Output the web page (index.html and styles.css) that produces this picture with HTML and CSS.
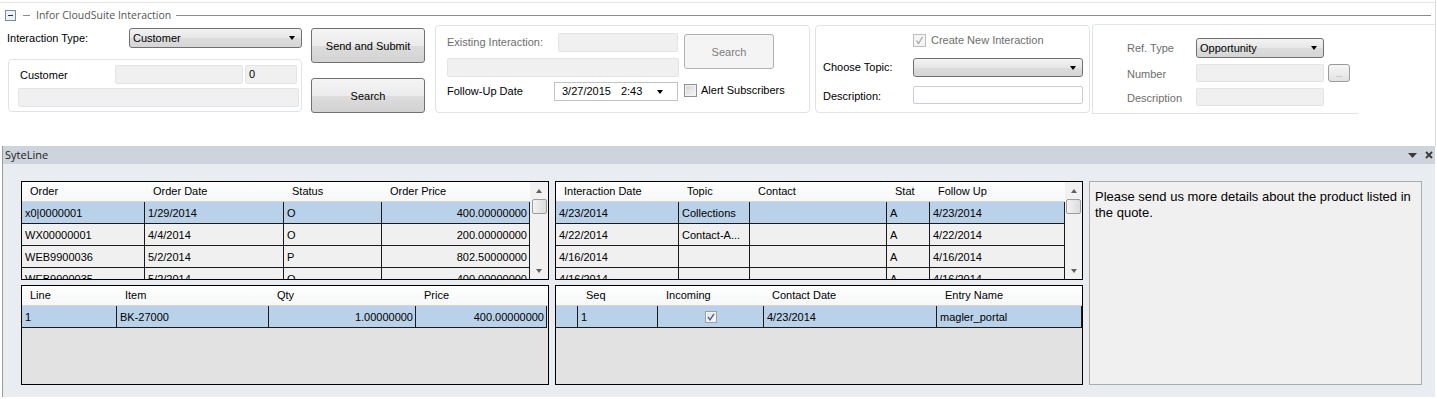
FILE: index.html
```html
<!DOCTYPE html>
<html lang="en">

<head>
    <meta charset="UTF-8">
    <meta name="viewport" content="width=device-width, initial-scale=1.0">
    <title>Infor CloudSuite Interaction</title>
    <link rel="stylesheet" href="styles.css">
</head>

<body>
    <div class="top">
        <div class="legend">
            <span class="toggle">
                <svg width="11" height="11" viewBox="0 0 11 11">
                    <rect x="0.5" y="0.5" width="10" height="10" fill="#eef1f5" stroke="#7d8a97" />
                    <path d="M3 5.5h5" stroke="#1d3047" stroke-width="1" />
                </svg>
            </span>
            <span class="dash"></span>
            <span class="legend-text">Infor CloudSuite Interaction</span>
            <span class="legend-line"></span>
        </div>

        <div class="panels">
            <!-- interaction type + customer -->
            <div class="col-type">
                <div class="type-row">
                    <span class="lbl">Interaction Type:</span>
                    <div class="combo type-combo"><span>Customer</span><i class="caret"></i></div>
                </div>
                <div class="cust-box">
                    <div class="cust-row">
                        <span class="lbl">Customer</span>
                        <div class="tb cust-id"></div>
                        <div class="tb cust-seq">0</div>
                    </div>
                    <div class="tb cust-name"></div>
                </div>
            </div>

            <div class="col-btns">
                <div class="btn send">Send and Submit</div>
                <div class="btn search">Search</div>
            </div>

            <!-- existing interaction -->
            <div class="panel p2">
                <div class="p2-top">
                    <div class="p2-fields">
                        <div class="p2-row">
                            <span class="lbl gray">Existing Interaction:</span>
                            <div class="tb exist-id"></div>
                        </div>
                        <div class="tb exist-name"></div>
                    </div>
                    <div class="btn btn-off p2-search">Search</div>
                </div>
                <div class="p2-row follow">
                    <span class="lbl">Follow-Up Date</span>
                    <div class="date"><span>3/27/2015</span><span class="time">2:43</span><i class="caret"></i></div>
                    <span class="chk"></span>
                    <span class="chk-lbl">Alert Subscribers</span>
                </div>
            </div>

            <!-- new interaction -->
            <div class="panel p3">
                <div class="p3-check">
                    <span class="chk chk-off">
                        <svg width="11" height="11" viewBox="0 0 11 11">
                            <path d="M2.5 5.5l2 3 4-6.5" fill="none" stroke="#a9a9a9" stroke-width="1.3" />
                        </svg>
                    </span>
                    <span class="chk-lbl gray">Create New Interaction</span>
                </div>
                <div class="p3-row">
                    <span class="lbl">Choose Topic:</span>
                    <div class="combo topic-combo"><span></span><i class="caret"></i></div>
                </div>
                <div class="p3-row desc">
                    <span class="lbl">Description:</span>
                    <div class="tb tb-white topic-desc"></div>
                </div>
            </div>

            <!-- reference -->
            <div class="p4">
                <div class="p4-body">
                    <div class="p4-row">
                        <span class="lbl gray">Ref. Type</span>
                        <div class="combo ref-combo"><span>Opportunity</span><i class="caret"></i></div>
                    </div>
                    <div class="p4-row num">
                        <span class="lbl gray">Number</span>
                        <div class="tb ref-field"></div>
                        <div class="dots">...</div>
                    </div>
                    <div class="p4-row num">
                        <span class="lbl gray">Description</span>
                        <div class="tb ref-field"></div>
                    </div>
                </div>
            </div>
        </div>
    </div>

    <div class="sl">
        <div class="sl-head">
            <span class="sl-title">SyteLine</span>
            <svg class="sl-drop" width="9" height="5" viewBox="0 0 9 5">
                <path d="M0 0h9L4.5 5z" fill="#3a3a3a" />
            </svg>
            <svg class="sl-close" width="8" height="8" viewBox="0 0 8 8">
                <path d="M1 1l6 6M7 1L1 7" stroke="#3a3a3a" stroke-width="1.8" />
            </svg>
        </div>

        <div class="sl-body">
            <div class="grid-col">
                <!-- orders -->
                <div class="grid orders">
                    <div class="gl-main">
                        <div class="gl-row head">
                            <div class="hc">Order</div>
                            <div class="hc">Order Date</div>
                            <div class="hc">Status</div>
                            <div class="hc">Order Price</div>
                        </div>
                        <div class="gl-row sel">
                            <div class="c">x0|0000001</div>
                            <div class="c">1/29/2014</div>
                            <div class="c">O</div>
                            <div class="c num">400.00000000</div>
                        </div>
                        <div class="gl-row">
                            <div class="c">WX00000001</div>
                            <div class="c">4/4/2014</div>
                            <div class="c">O</div>
                            <div class="c num">200.00000000</div>
                        </div>
                        <div class="gl-row">
                            <div class="c">WEB9900036</div>
                            <div class="c">5/2/2014</div>
                            <div class="c">P</div>
                            <div class="c num">802.50000000</div>
                        </div>
                        <div class="gl-row">
                            <div class="c">WEB9900035</div>
                            <div class="c">5/2/2014</div>
                            <div class="c">O</div>
                            <div class="c num">400.00000000</div>
                        </div>
                    </div>
                    <div class="vscroll">
                        <div class="sb-btn"><i class="sb-up"></i></div>
                        <div class="sb-thumb"></div>
                        <div class="sb-space"></div>
                        <div class="sb-btn"><i class="sb-down"></i></div>
                    </div>
                </div>

                <!-- order lines -->
                <div class="grid lines">
                    <div class="gl-main">
                        <div class="gl-row head">
                            <div class="hc">Line</div>
                            <div class="hc">Item</div>
                            <div class="hc">Qty</div>
                            <div class="hc">Price</div>
                        </div>
                        <div class="gl-row sel">
                            <div class="c">1</div>
                            <div class="c">BK-27000</div>
                            <div class="c num">1.00000000</div>
                            <div class="c num">400.00000000</div>
                        </div>
                    </div>
                </div>
            </div>

            <div class="grid-col">
                <!-- interactions -->
                <div class="grid interactions">
                    <div class="gl-main">
                        <div class="gl-row head">
                            <div class="hc">Interaction Date</div>
                            <div class="hc">Topic</div>
                            <div class="hc">Contact</div>
                            <div class="hc">Stat</div>
                            <div class="hc">Follow Up</div>
                        </div>
                        <div class="gl-row sel">
                            <div class="c">4/23/2014</div>
                            <div class="c">Collections</div>
                            <div class="c"></div>
                            <div class="c">A</div>
                            <div class="c">4/23/2014</div>
                        </div>
                        <div class="gl-row">
                            <div class="c">4/22/2014</div>
                            <div class="c">Contact-A...</div>
                            <div class="c"></div>
                            <div class="c">A</div>
                            <div class="c">4/22/2014</div>
                        </div>
                        <div class="gl-row">
                            <div class="c">4/16/2014</div>
                            <div class="c"></div>
                            <div class="c"></div>
                            <div class="c">A</div>
                            <div class="c">4/16/2014</div>
                        </div>
                        <div class="gl-row">
                            <div class="c">4/16/2014</div>
                            <div class="c"></div>
                            <div class="c"></div>
                            <div class="c">A</div>
                            <div class="c">4/16/2014</div>
                        </div>
                    </div>
                    <div class="vscroll">
                        <div class="sb-btn"><i class="sb-up"></i></div>
                        <div class="sb-thumb"></div>
                        <div class="sb-space"></div>
                        <div class="sb-btn"><i class="sb-down"></i></div>
                    </div>
                </div>

                <!-- contacts -->
                <div class="grid contacts">
                    <div class="gl-main">
                        <div class="gl-row head">
                            <div class="hc"></div>
                            <div class="hc">Seq</div>
                            <div class="hc">Incoming</div>
                            <div class="hc">Contact Date</div>
                            <div class="hc">Entry Name</div>
                        </div>
                        <div class="gl-row sel">
                            <div class="c"></div>
                            <div class="c">1</div>
                            <div class="c mid">
                                <span class="chk chk-grid">
                                    <svg width="10" height="10" viewBox="0 0 10 10">
                                        <path d="M2 5l2 2.8 4-6" fill="none" stroke="#4c5f86" stroke-width="1.4" />
                                    </svg>
                                </span>
                            </div>
                            <div class="c">4/23/2014</div>
                            <div class="c">magler_portal</div>
                        </div>
                    </div>
                </div>
            </div>

            <div class="note">Please send us more details about the product listed in the quote.</div>
        </div>
    </div>
</body>

</html>
```

FILE: styles.css
```css
* {
    box-sizing: border-box;
    margin: 0;
    padding: 0;
}

body {
    width: 1437px;
    height: 399px;
    overflow: hidden;
    background: #fff;
    color: #000;
    font-family: "Liberation Sans", Arial, sans-serif;
    font-size: 11px;
}

/* top form */
.top {
    height: 146px;
    padding-top: 2px;
    width: 1436px;
    border-right: 1px solid #dcdcdc;
}

.legend {
    display: flex;
    align-items: flex-start;
    height: 22px;
    padding-left: 5px;
    border-top: 1px solid #e3e3e3;
}

.toggle {
    display: flex;
    margin-top: 7px;
}

.dash {
    width: 7px;
    margin: 12px 0 0 7px;
    border-top: 1px solid #8a8a8a;
}

.legend-text {
    margin: 4px 0 0 6px;
    line-height: 16px;
    color: #555;
    font-family: "Open Sans", "Liberation Sans", sans-serif;
    font-size: 10.5px;
}

.legend-line {
    flex: 1;
    margin: 12px 4px 0 5px;
    border-top: 1px solid #8a8a8a;
}

.panels {
    display: flex;
    align-items: flex-start;
    height: 90px;
}

.lbl {
    white-space: nowrap;
}

.gray {
    color: #6d6d6d;
}

/* controls */
.tb {
    height: 19px;
    line-height: 17px;
    padding-left: 3px;
    background: #f0f0f0;
    border: 1px solid #e2e4e6;
    border-radius: 2px;
}

.tb-white {
    background: #fff;
    border-color: #c9ccd0;
}

.combo {
    display: flex;
    align-items: center;
    justify-content: space-between;
    height: 20px;
    padding: 0 6px 0 3px;
    border: 1px solid #707070;
    border-radius: 3px;
    background: linear-gradient(#f3f3f3, #e6e6e6 50%, #dcdcdc 51%, #d6d6d6);
}

.caret {
    width: 0;
    height: 0;
    border-left: 3.5px solid transparent;
    border-right: 3.5px solid transparent;
    border-top: 4px solid #000;
}

.btn {
    display: flex;
    align-items: center;
    justify-content: center;
    height: 35px;
    border: 1px solid #707070;
    border-radius: 3px;
    background: linear-gradient(#f5f5f5, #ebebeb 50%, #dddddd 51%, #d2d2d2);
}

.btn-off {
    color: #7d7d7d;
    border-color: #adb2b5;
    background: #f4f4f4;
}

.chk {
    display: flex;
    align-items: center;
    justify-content: center;
    width: 13px;
    height: 13px;
    border: 1px solid #8e8f8f;
    background: linear-gradient(135deg, #d4d4d4, #f8f8f8);
    box-shadow: inset 0 0 0 1px #f2f2f2;
}

.chk-off {
    border-color: #bdbdbd;
    background: #f4f4f4;
    box-shadow: none;
}

/* interaction type column */
.col-type {
    width: 303px;
}

.type-row {
    display: flex;
    margin-top: 4px;
    height: 20px;
}

.type-row .lbl {
    width: 129px;
    padding-left: 7px;
    line-height: 21px;
}

.type-combo {
    width: 173px;
}

.cust-box {
    width: 294px;
    height: 53px;
    margin: 11px 0 0 8px;
    padding: 5px 0 0 9px;
    border: 1px solid #dfe3e8;
    border-radius: 4px;
}

.cust-row {
    display: flex;
    height: 19px;
}

.cust-row .lbl {
    width: 97px;
    padding-left: 2px;
    line-height: 21px;
}

.cust-id {
    width: 128px;
}

.cust-seq {
    width: 52px;
    margin-left: 2px;
}

.cust-name {
    width: 281px;
    margin-top: 4px;
}

.col-btns {
    width: 114px;
    margin-left: 8px;
}

.btn.send {
    margin-top: 4px;
}

.btn.search {
    margin-top: 15px;
}

/* panels */
.panel {
    height: 88px;
    margin-top: 1px;
    border: 1px solid #dfe3e8;
    border-radius: 4px;
}

.p2 {
    width: 375px;
    margin-left: 10px;
    padding: 7px 0 0 11px;
}

.p2-top {
    display: flex;
}

.p2-fields {
    width: 232px;
}

.p2-row {
    display: flex;
    align-items: flex-start;
    height: 19px;
    line-height: 19px;
}

.p2-row .lbl {
    width: 111px;
}

.exist-id {
    width: 120px;
}

.exist-name {
    width: 232px;
    margin-top: 6px;
}

.p2-search {
    width: 90px;
    margin: 1px 0 0 5px;
}

.p2-row.follow {
    margin-top: 5px;
}

.follow .lbl {
    width: 107px;
}

.date {
    display: flex;
    align-items: center;
    width: 124px;
    height: 19px;
    padding: 0 14px 0 7px;
    background: #fff;
    border: 1px solid #bfc3c7;
}

.date .time {
    flex: 1;
    margin-left: 10px;
}

.follow .chk {
    margin: 2px 0 0 6px;
}

.chk-lbl {
    margin-left: 4px;
    line-height: 16px;
}

.p3 {
    width: 275px;
    margin-left: 5px;
    padding: 8px 0 0 7px;
}

.p3-check {
    display: flex;
    height: 13px;
}

.p3-check .chk {
    margin-left: 90px;
}

.p3-check .chk-lbl {
    margin-left: 5px;
    line-height: 13px;
}

.p3-row {
    display: flex;
    margin-top: 11px;
    height: 19px;
    line-height: 19px;
}

.p3-row .lbl {
    width: 90px;
}

.topic-combo {
    width: 170px;
    height: 19px;
}

.p3-row.desc {
    margin-top: 9px;
    height: 18px;
    line-height: 20px;
}

.topic-desc {
    width: 170px;
    height: 18px;
}

.p4 {
    flex: 1;
    height: 90px;
    margin-left: 2px;
    border-top: 1px solid #dfe3e8;
    border-left: 1px solid #dfe3e8;
    border-radius: 4px 0 0 0;
}

.p4-body {
    width: 265px;
    height: 89px;
    padding: 13px 0 0 34px;
    border-bottom: 1px solid #dfe3e8;
}

.p4-row {
    display: flex;
    height: 20px;
    line-height: 21px;
}

.p4-row .lbl {
    width: 69px;
}

.ref-combo {
    width: 128px;
    line-height: normal;
}

.p4-row.num {
    margin-top: 6px;
    height: 18px;
    line-height: 20px;
}

.ref-field {
    width: 128px;
    height: 18px;
}

.dots {
    width: 22px;
    height: 18px;
    margin-left: 4px;
    padding-top: 1px;
    text-align: center;
    line-height: 17px;
    font-size: 8px;
    color: #8a8a8a;
    border: 1px solid #9a9a9a;
    border-radius: 3px;
    background: linear-gradient(#f5f5f5, #e2e2e2);
}

/* SyteLine pane */
.sl {
    width: 1433px;
    height: 251px;
    margin-left: 2px;
    border-left: 1px solid #9b9b9b;
    background: #e9ecf1;
}

.sl-head {
    display: flex;
    align-items: center;
    height: 18px;
    padding: 0 2px 0 2px;
    background: #cdd4dc;
}

.sl-title {
    flex: 1;
    line-height: 18px;
    color: #222;
    font-family: "Open Sans", "Liberation Sans", sans-serif;
    font-size: 11px;
}

.sl-drop {
    margin-right: 8px;
}

.sl-body {
    display: flex;
    gap: 6px;
    padding: 17px 0 0 18px;
}

.grid-col {
    display: flex;
    flex-direction: column;
    gap: 5px;
    width: 528px;
}

.grid {
    display: flex;
    overflow: hidden;
    border: 1px solid #000;
    background: #e2e2e2;
}

.orders,
.interactions {
    height: 99px;
}

.lines,
.contacts {
    height: 100px;
}

.orders {
    --cols: 123px 139px 98px 148px;
}

.interactions {
    --cols: 123px 71px 137px 43px 135px;
}

.lines {
    --cols: 95px 152px 147px 131px 1fr;
}

.contacts {
    --cols: 22px 80px 106px 173px 145px;
}

.gl-main {
    flex: 1;
    overflow: hidden;
}

.orders .gl-main,
.interactions .gl-main {
    flex: none;
}

.orders .gl-main {
    width: 508px;
}

.interactions .gl-main {
    width: 509px;
}

.gl-row {
    display: grid;
    grid-template-columns: var(--cols);
}

.gl-row.head {
    height: 20px;
    background: linear-gradient(#ffffff, #f6f7f8);
    border-bottom: 1px solid #d5d5d5;
}

.hc {
    padding-left: 8px;
    line-height: 19px;
    white-space: nowrap;
    overflow: hidden;
}

.c {
    display: flex;
    align-items: center;
    height: 22px;
    padding: 0 3px;
    white-space: nowrap;
    overflow: hidden;
    background: #f0f0f0;
    border-right: 1px solid #1a1a1a;
    border-bottom: 1px solid #1a1a1a;
}

.sel .c {
    background: #bad1ea;
}

.c.num {
    justify-content: flex-end;
    padding-right: 2px;
}

.c.mid {
    justify-content: center;
}

.chk-grid {
    width: 12px;
    height: 12px;
    border-color: #97a0ab;
    background: linear-gradient(135deg, #dfe3e8, #fafafa);
}

/* scrollbar */
.vscroll {
    flex: 1;
    display: flex;
    flex-direction: column;
    align-items: center;
    background: #f1f1f1;
}

.sb-btn {
    display: flex;
    align-items: center;
    justify-content: center;
    height: 17px;
}

.sb-up,
.sb-down {
    width: 0;
    height: 0;
    border-left: 3.5px solid transparent;
    border-right: 3.5px solid transparent;
}

.sb-up {
    border-bottom: 4px solid #606060;
}

.sb-down {
    border-top: 4px solid #606060;
}

.sb-thumb {
    width: 15px;
    height: 15px;
    border: 1px solid #9d9d9d;
    border-radius: 2px;
    background: linear-gradient(90deg, #f3f3f3, #dcdcdc);
}

.sb-space {
    flex: 1;
}

.note {
    width: 333px;
    height: 204px;
    padding: 7px 5px;
    font-size: 13px;
    line-height: 16px;
    background: #f0f0f0;
    border: 1px solid #a9abad;
}
```
